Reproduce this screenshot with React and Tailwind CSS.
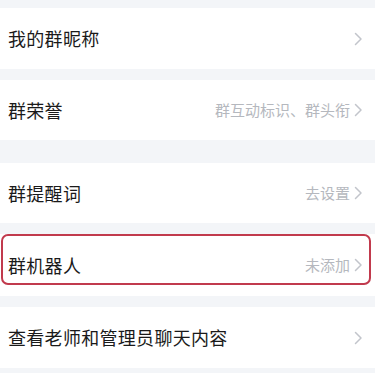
import React from 'react';

const Chevron = () => (
  <svg width="9" height="14" viewBox="0 0 9 14" className="ml-[4px] shrink-0">
    <path d="M1.5 1.5 L7 7 L1.5 12.5" fill="none" stroke="#c2c5cb" strokeWidth="1.5" strokeLinecap="round" strokeLinejoin="round" />
  </svg>
);

const Row = ({ title, value, h = 'h-[61px]', children }) => (
  <div className={`relative flex items-center justify-between bg-white pl-[8px] pr-[12px] ${h}`}>
    <span className="text-[18px] text-[#1a1a1a] tracking-[0.3px]">{title}</span>
    <div className="flex items-center">
      {value && <span className="text-[15px] text-[#b5b8be]">{value}</span>}
      <Chevron />
    </div>
    {children}
  </div>
);

export default function App() {
  return (
    <div
      className="w-[375px] h-[373px] overflow-hidden bg-[#f3f5f8] pt-[8px] flex flex-col"
      style={{ fontFamily: '"Noto Sans CJK SC", "Noto Sans", sans-serif' }}
    >
      <Row title="我的群昵称" />
      <div className="h-[11px] shrink-0" />
      <Row title="群荣誉" value="群互动标识、群头衔" h="h-[60px]" />
      <div className="h-[23px] shrink-0" />
      <Row title="群提醒词" value="去设置" h="h-[60px]" />
      <div className="h-[11px] shrink-0" />
      <Row title="群机器人" value="未添加" h="h-[62px]">
        <div className="absolute left-[1px] right-[4px] top-0 h-[51px] rounded-[7px] border-2 border-[#c13a4d] pointer-events-none" />
      </Row>
      <div className="h-[11px] shrink-0" />
      <Row title="查看老师和管理员聊天内容" />
    </div>
  );
}
